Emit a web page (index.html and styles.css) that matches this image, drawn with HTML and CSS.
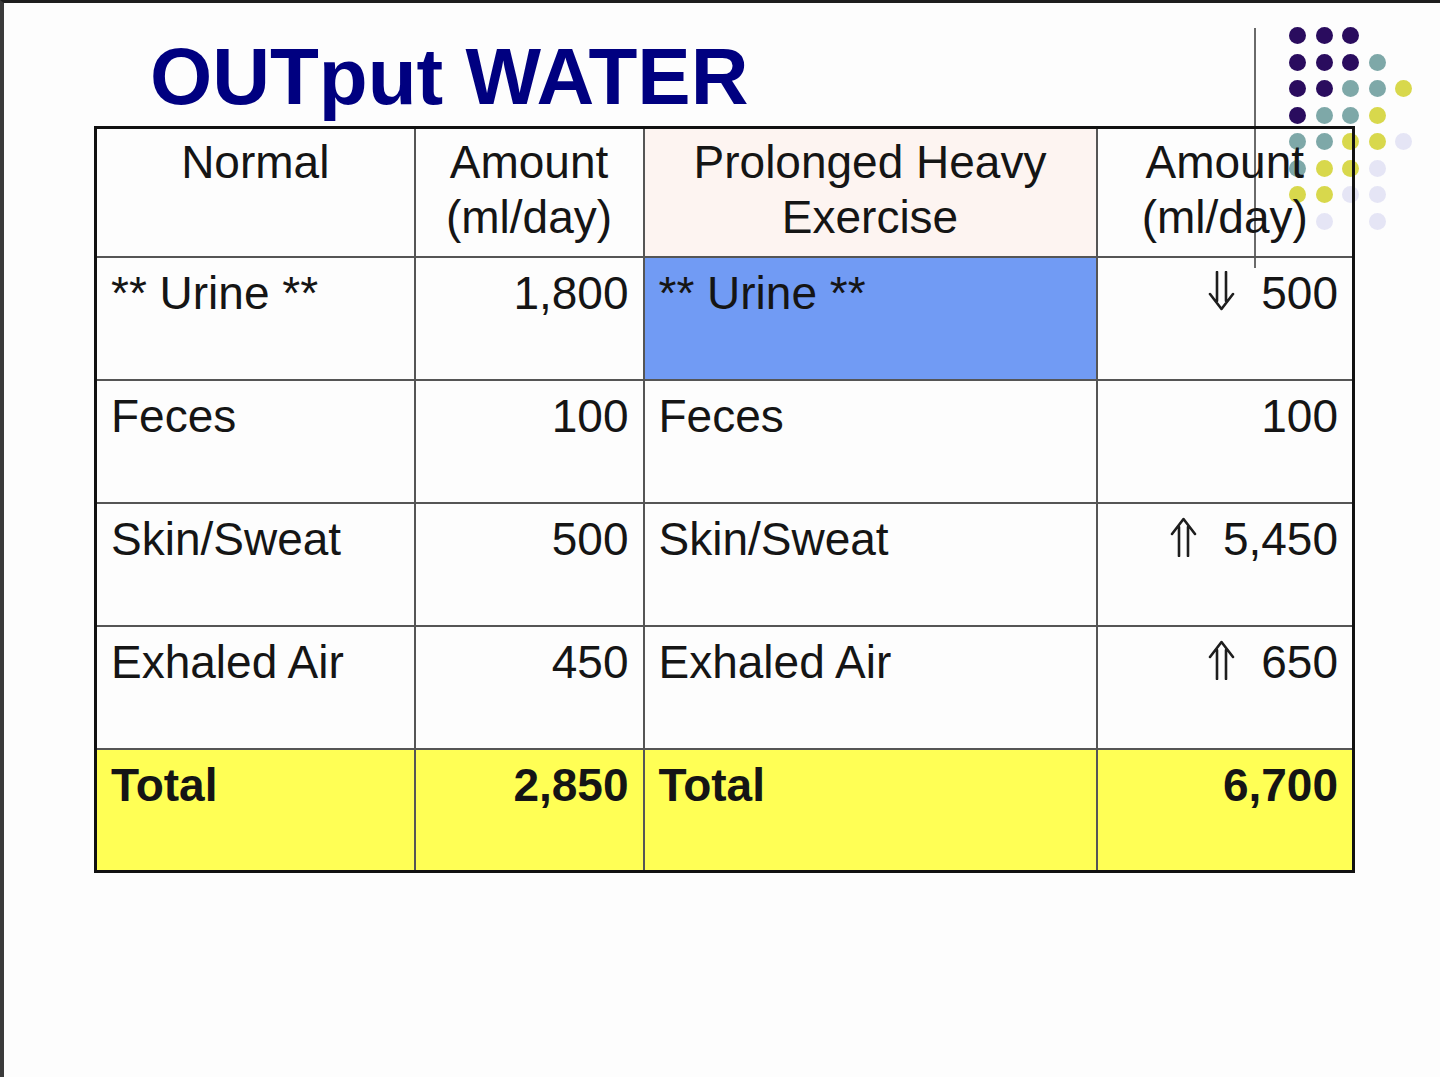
FILE: index.html
```html
<!DOCTYPE html>
<html lang="en">
<head>
<meta charset="utf-8">
<title>OUTput WATER</title>
<link rel="stylesheet" href="styles.css">
</head>
<body>
<div class="slide">
  <div class="deco" aria-hidden="true">
    <div class="vline"></div>
    <div class="dots">
      <span class="d p"></span><span class="d p"></span><span class="d p"></span><span class="d"></span><span class="d"></span>
      <span class="d p"></span><span class="d p"></span><span class="d p"></span><span class="d t"></span><span class="d"></span>
      <span class="d p"></span><span class="d p"></span><span class="d t"></span><span class="d t"></span><span class="d y"></span>
      <span class="d p"></span><span class="d t"></span><span class="d t"></span><span class="d y"></span><span class="d"></span>
      <span class="d t"></span><span class="d t"></span><span class="d y"></span><span class="d y"></span><span class="d l"></span>
      <span class="d t"></span><span class="d y"></span><span class="d y"></span><span class="d l"></span><span class="d"></span>
      <span class="d y"></span><span class="d y"></span><span class="d l"></span><span class="d l"></span><span class="d"></span>
      <span class="d"></span><span class="d l"></span><span class="d"></span><span class="d l"></span><span class="d"></span>
    </div>
  </div>
  <h1 class="title">OUTput WATER</h1>
  <table class="tbl">
    <colgroup>
      <col class="c1"><col class="c2"><col class="c3"><col class="c4">
    </colgroup>
    <tr class="head">
      <th>Normal</th>
      <th>Amount<br>(ml/day)</th>
      <th class="pink">Prolonged Heavy<br>Exercise</th>
      <th class="clear">Amount<br>(ml/day)</th>
    </tr>
    <tr>
      <td>** Urine **</td>
      <td class="num">1,800</td>
      <td class="blue">** Urine **</td>
      <td class="num"><svg class="arr" viewBox="0 0 27 40" aria-label="decreased"><path d="M9 1V30M18 1V30M2 23L13.5 38L25 23" /></svg>500</td>
    </tr>
    <tr>
      <td>Feces</td>
      <td class="num">100</td>
      <td>Feces</td>
      <td class="num">100</td>
    </tr>
    <tr>
      <td>Skin/Sweat</td>
      <td class="num">500</td>
      <td>Skin/Sweat</td>
      <td class="num"><svg class="arr" viewBox="0 0 27 40" aria-label="increased"><path d="M9 39V10M18 39V10M2 17L13.5 2L25 17" /></svg>5,450</td>
    </tr>
    <tr>
      <td>Exhaled Air</td>
      <td class="num">450</td>
      <td>Exhaled Air</td>
      <td class="num"><svg class="arr" viewBox="0 0 27 40" aria-label="increased"><path d="M9 39V10M18 39V10M2 17L13.5 2L25 17" /></svg>650</td>
    </tr>
    <tr class="total">
      <td>Total</td>
      <td class="num">2,850</td>
      <td>Total</td>
      <td class="num">6,700</td>
    </tr>
  </table>
</div>
</body>
</html>
```
FILE: styles.css
```css
html, body {
  margin: 0;
  padding: 0;
  background: #fdfdfd;
}

.slide {
  position: relative;
  box-sizing: border-box;
  width: 1440px;
  height: 1077px;
  border-top: 3px solid #1e1e1e;
  border-left: 4px solid #3a3a3a;
  background: #fdfdfd;
  font-family: "Liberation Sans", Arial, sans-serif;
  overflow: hidden;
}

.deco {
  position: absolute;
  left: 0;
  top: 0;
  width: 100%;
  height: 100%;
  z-index: 0;
}

.vline {
  position: absolute;
  left: 1250px;
  top: 25px;
  width: 2px;
  height: 240px;
  background: #6a6a6a;
}

.dots {
  position: absolute;
  left: 1285px;
  top: 24px;
  display: grid;
  grid-template-columns: repeat(5, 17px);
  grid-auto-rows: 17px;
  column-gap: 9.5px;
  row-gap: 9.5px;
}

.d {
  width: 17px;
  height: 17px;
  border-radius: 50%;
}
.d.p { background: #2a0c5e; }
.d.t { background: #7ea8a8; }
.d.y { background: #d8d84c; }
.d.l { background: #e5e5f5; }

.title {
  position: relative;
  z-index: 1;
  margin: 34px 0 0 146px;
  font-size: 80px;
  line-height: 80px;
  font-weight: bold;
  color: #000080;
}

.tbl {
  position: relative;
  z-index: 1;
  margin: 9px 0 0 90px;
  border-collapse: collapse;
  border: 3px solid #111;
  table-layout: fixed;
  width: 1258px;
  font-size: 46px;
  line-height: 55px;
  color: #151515;
}

.c1 { width: 319px; }
.c2 { width: 229px; }
.c3 { width: 453px; }
.c4 { width: 257px; }

.tbl th,
.tbl td {
  border: 2px solid #555;
  vertical-align: top;
  padding: 8px 14px 0 14px;
  text-align: left;
  font-weight: normal;
  white-space: nowrap;
}

.tbl th {
  text-align: center;
  padding-top: 6px;
}

.tbl tr { height: 123px; }
.tbl tr.head { height: 129px; }

.tbl td.num { text-align: right; }

.pink { background: #fdf4f1; }
.clear { background: transparent; }
.blue { background: #719bf4; }

.arr {
  display: inline-block;
  width: 27px;
  height: 40px;
  margin-right: 26px;
  vertical-align: -2px;
  fill: none;
  stroke: #1e1e1e;
  stroke-width: 2.6;
  stroke-linecap: round;
  stroke-linejoin: round;
}

.tbl tr.total td {
  background: #ffff55;
  font-weight: bold;
}
```
